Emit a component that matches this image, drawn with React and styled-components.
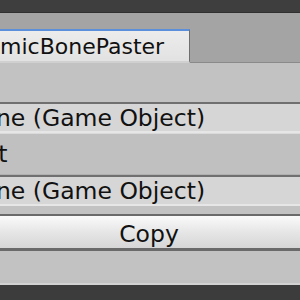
import React from "react";
import styled, { createGlobalStyle } from "styled-components";

const Global = createGlobalStyle`
  html, body { margin: 0; padding: 0; background: #3c3c3c; overflow: hidden; }
  body { width: 300px; height: 300px; }
  #root { width: 300px; height: 300px; overflow: hidden; }
`;

const Screen = styled.div`
  width: 300px;
  height: 300px;
  display: flex;
  flex-direction: column;
  overflow: hidden;
  background: #3c3c3c;
  font-family: "DejaVu Sans", "Verdana", sans-serif;
  font-size: 23.5px;
  color: #111;
`;

const TitleBar = styled.div`
  height: 12px;
  flex: none;
  background: #3e3e3e;
  border-bottom: 1px solid #303030;
`;

const TabStrip = styled.div`
  height: 49px;
  flex: none;
  display: flex;
  align-items: flex-end;
  background: #a4a4a4;
  border-bottom: 1px solid #8a8a8a;
  margin-left: -60px;
`;

const Tab = styled.div`
  height: 34px;
  width: 250px;
  box-sizing: border-box;
  padding-left: 60px;
  display: flex;
  align-items: center;
  font-size: 22px;
  background: linear-gradient(#ececec, #e2e2e2);
  border-top: 2px solid #5b8fdb;
  border-right: 1px solid #6f6f6f;
  border-bottom: 2px solid #d0d0d0;
  white-space: nowrap;
  margin-bottom: -1px;
`;

const Panel = styled.div`
  flex: none;
  height: 222px;
  display: flex;
  flex-direction: column;
  background: #c2c2c2;
  padding-top: 39px;
  box-sizing: border-box;
  border-bottom: 2px solid #d2d2d2;
`;

const Row = styled.div`
  height: ${(p) => p.$h}px;
  flex: none;
  box-sizing: border-box;
  display: flex;
  align-items: center;
  white-space: nowrap;
  margin-left: ${(p) => p.$x}px;
  background: ${(p) => (p.$field ? "#d6d6d6" : "#c0c0c0")};
  border-top: ${(p) => (p.$field ? "2px solid #707070" : "1px solid #dadada")};
  border-bottom: ${(p) => (p.$field ? "2px solid #e6e6e6" : "1px solid #b0b0b0")};
`;

const Spacer = styled.div`
  height: ${(p) => p.$h}px;
  flex: none;
`;

const Button = styled.div`
  height: 37px;
  flex: none;
  box-sizing: border-box;
  margin-left: -4px;
  display: flex;
  align-items: center;
  justify-content: center;
  padding-top: 4px;
  background: linear-gradient(#fafafa, #e6e6e6 50%, #d6d6d6);
  border-top: 2px solid #6a6a6a;
  border-bottom: 3px solid #6a6a6a;
  border-left: 2px solid #6a6a6a;
`;

export default function App() {
  return (
    <>
      <Global />
      <Screen>
        <TitleBar />
        <TabStrip>
          <Tab>micBonePaster</Tab>
        </TabStrip>
        <Panel>
          <Row $h={31} $x={-36} $field>None (Game Object)</Row>
          <Row $h={42} $x={-69}>Object</Row>
          <Row $h={31} $x={-36} $field>None (Game Object)</Row>
          <Spacer $h={8} />
          <Button>Copy</Button>
        </Panel>
      </Screen>
    </>
  );
}
